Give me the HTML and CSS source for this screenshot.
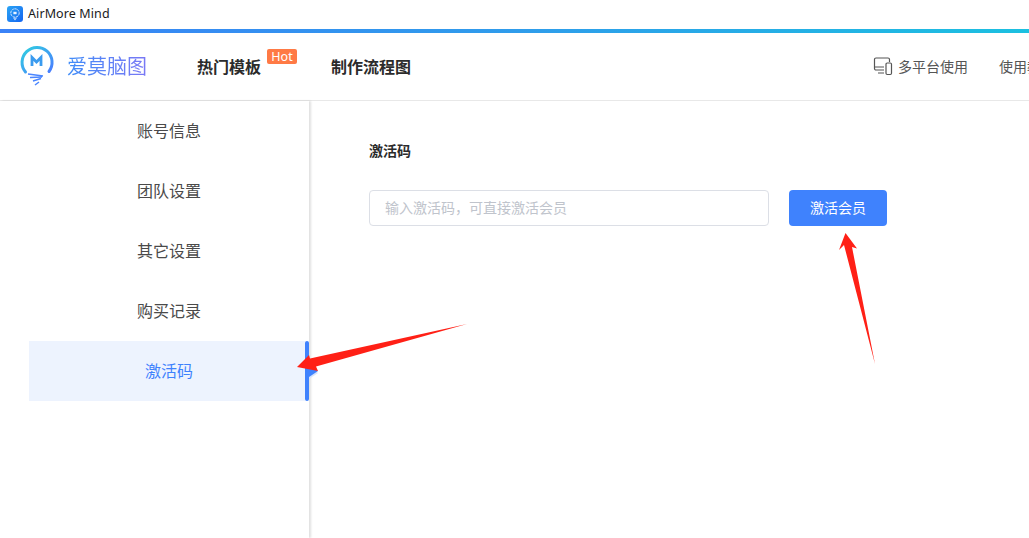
FILE: index.html
```html
<!DOCTYPE html>
<html lang="zh-CN">
<head>
<meta charset="utf-8">
<title>AirMore Mind</title>
<link rel="stylesheet" href="styles.css">
</head>
<body>
<div class="page">
  <div class="titlebar">
    <svg class="app-icon" width="16" height="16" viewBox="0 0 16 16">
      <defs><linearGradient id="ai" x1="0" y1="0" x2="1" y2="1"><stop offset="0" stop-color="#2aa5f5"/><stop offset="1" stop-color="#1464f0"/></linearGradient></defs>
      <rect width="16" height="16" rx="3" fill="url(#ai)"/>
      <circle cx="8" cy="7" r="4.2" fill="none" stroke="#cfe4ff" stroke-width="1" stroke-dasharray="2.500 .6"/>
      <rect x="6.400" y="5.800" width="3.200" height="2.400" fill="#e8f2ff"/>
      <path d="M6.400 12.200h3.200M7.200 13.600h1.600" stroke="#cfe4ff" stroke-width="1"/>
    </svg>
    <span class="app-name">AirMore Mind</span>
  </div>
  <div class="gradient-bar"></div>
  <header class="header">
    <div class="brand">
      <svg class="logo" width="36" height="42" viewBox="0 0 36 42">
        <defs><linearGradient id="lg" x1="0" y1="0" x2="1" y2="1"><stop offset="0" stop-color="#2fd0e0"/><stop offset="1" stop-color="#4a7cff"/></linearGradient></defs>
        <path d="M6.500 27A15 15 0 1 1 30 26.500" fill="none" stroke="url(#lg)" stroke-width="3" stroke-linecap="round"/>
        <path d="M13 21v-8.500l4.500 4.500 4.500-4.500V21" fill="none" stroke="#3a9bef" stroke-width="2.800"/>
        <path d="M9 29l15 2M11 32.500l12-.500M14 36l8-2.500M16 40l4-3" fill="none" stroke="#4a86ff" stroke-width="1.500"/>
      </svg>
      <span class="brand-name">爱莫脑图</span>
    </div>
    <nav class="nav">
      <a class="nav-link nav-hot">热门模板<span class="hot">Hot</span></a>
      <a class="nav-link">制作流程图</a>
    </nav>
    <div class="tools">
      <span class="tool">
        <svg width="20" height="20" viewBox="0 0 20 20" fill="none" stroke="#555" stroke-width="1.200">
          <path d="M11 14H3a1.500 1.500 0 0 1-1.500-1.500V3.500A1.500 1.500 0 0 1 3 2h12a1.500 1.500 0 0 1 1.500 1.500V6"/>
          <path d="M2 11h9M5 17h6"/>
          <rect x="13" y="7" width="5.500" height="11.500" rx="1.200"/>
        </svg>
        多平台使用
      </span>
      <span class="tool">使用教程</span>
    </div>
  </header>
  <div class="body">
    <aside class="sidebar">
      <div class="menu-item">账号信息</div>
      <div class="menu-item">团队设置</div>
      <div class="menu-item">其它设置</div>
      <div class="menu-item">购买记录</div>
      <div class="menu-item active">激活码</div>
    </aside>
    <main class="content">
      <h2 class="section-title">激活码</h2>
      <div class="form-row">
        <input class="code-input" type="text" placeholder="输入激活码，可直接激活会员">
        <button class="submit">激活会员</button>
      </div>
    </main>
  </div>
  <svg class="annotation" width="1029" height="538" viewBox="0 0 1029 538">
    <path class="arrow" d="M467 324L310 358.500L309 355L297 367L318 371L316 366.500Z"/>
    <path class="arrow" d="M875 364L852 247L857 248.500L845.500 233L839 250L844 245Z"/>
  </svg>
</div>
</body>
</html>
```
FILE: styles.css
```css
* { box-sizing: border-box; }
html, body { margin: 0; padding: 0; }
body {
  width: 1029px;
  height: 538px;
  overflow: hidden;
  background: #fff;
  font-family: "Noto Sans CJK SC", "Noto Sans", sans-serif;
  color: #333;
}
.page { position: relative; width: 1029px; height: 538px; overflow: hidden; }
.titlebar {
  height: 29px;
  display: flex;
  align-items: center;
  gap: 5px;
  padding: 0 0 2px 7px;
}
.app-name { font-family: "Noto Sans", sans-serif; font-size: 12.5px; color: #1a1a1a; letter-spacing: .1px; }
.gradient-bar { height: 4px; background: linear-gradient(90deg, #3a82f7 0%, #2f9ceb 50%, #1cc0e0 100%); }
.header {
  height: 68px;
  display: flex;
  align-items: center;
  border-bottom: 1px solid #e8e8e8;
  padding: 0 0 2px 19px;
  white-space: nowrap;
}
.brand { display: flex; align-items: center; gap: 12px; width: 178px; }
.logo { flex: none; margin-top: 1px; }
.brand-name {
  font-size: 20px;
  line-height: 28px;
  background: linear-gradient(90deg, #3f8cf8, #7a78f5);
  -webkit-background-clip: text;
  background-clip: text;
  color: transparent;
}
.nav { display: flex; gap: 70px; flex: 1; }
.nav-link { position: relative; font-size: 16px; font-weight: 700; color: #2b2b2b; line-height: 24px; }
.hot {
  position: absolute;
  left: 70px;
  top: -5px;
  width: 30px;
  height: 15px;
  border-radius: 2px;
  background: #ff7a45;
  color: #fff;
  font-family: "Noto Sans", sans-serif;
  font-size: 12.500px;
  font-weight: 400;
  line-height: 15px;
  text-align: center;
}
.tools { display: flex; gap: 31px; width: 156px; flex: none; overflow: hidden; }
.tool { display: flex; align-items: center; gap: 5px; font-size: 14px; color: #555; line-height: 20px; flex: none; }
.body { display: flex; height: 437px; }
.sidebar {
  width: 309px;
  flex: none;
  padding-left: 29px;
  box-shadow: 2px 0 2px rgba(0, 0, 0, .12);
}
.menu-item {
  position: relative;
  width: 276px;
  height: 60px;
  padding-left: 4px;
  line-height: 59px;
  text-align: center;
  font-size: 16px;
  color: #4a4a4a;
}
.menu-item.active { background: #edf3fe; color: #3f82fd; }
.menu-item.active::before {
  content: "";
  position: absolute;
  left: 276px;
  top: 0;
  width: 4px;
  height: 60px;
  border-radius: 2px;
  background: #3f82fd;
}
.menu-item.active::after {
  content: "";
  position: absolute;
  left: 280px;
  top: 24px;
  border-left: 9px solid #3f82fd;
  border-top: 6px solid transparent;
  border-bottom: 6px solid transparent;
  filter: drop-shadow(0 2px 0 #d6e4fd);
}
.content { flex: 1; padding: 39px 0 0 60px; }
.section-title { margin: 0; font-size: 14px; font-weight: 700; color: #2b2b2b; line-height: 20px; }
.form-row { display: flex; gap: 20px; margin-top: 30px; }
.code-input {
  width: 400px;
  height: 36px;
  padding: 0 15px 2px;
  border: 1px solid #dcdfe6;
  border-radius: 4px;
  outline: none;
  font-family: inherit;
  font-size: 14px;
}
.code-input::placeholder { color: #c0c4cc; opacity: 1; }
.submit {
  width: 98px;
  height: 36px;
  padding: 0 0 2px;
  border: 0;
  border-radius: 4px;
  background: #3f82fd;
  color: #fff;
  font-family: inherit;
  font-size: 14px;
}
.annotation { position: absolute; left: 0; top: 0; pointer-events: none; }
.arrow { fill: #ff2016; }
```
